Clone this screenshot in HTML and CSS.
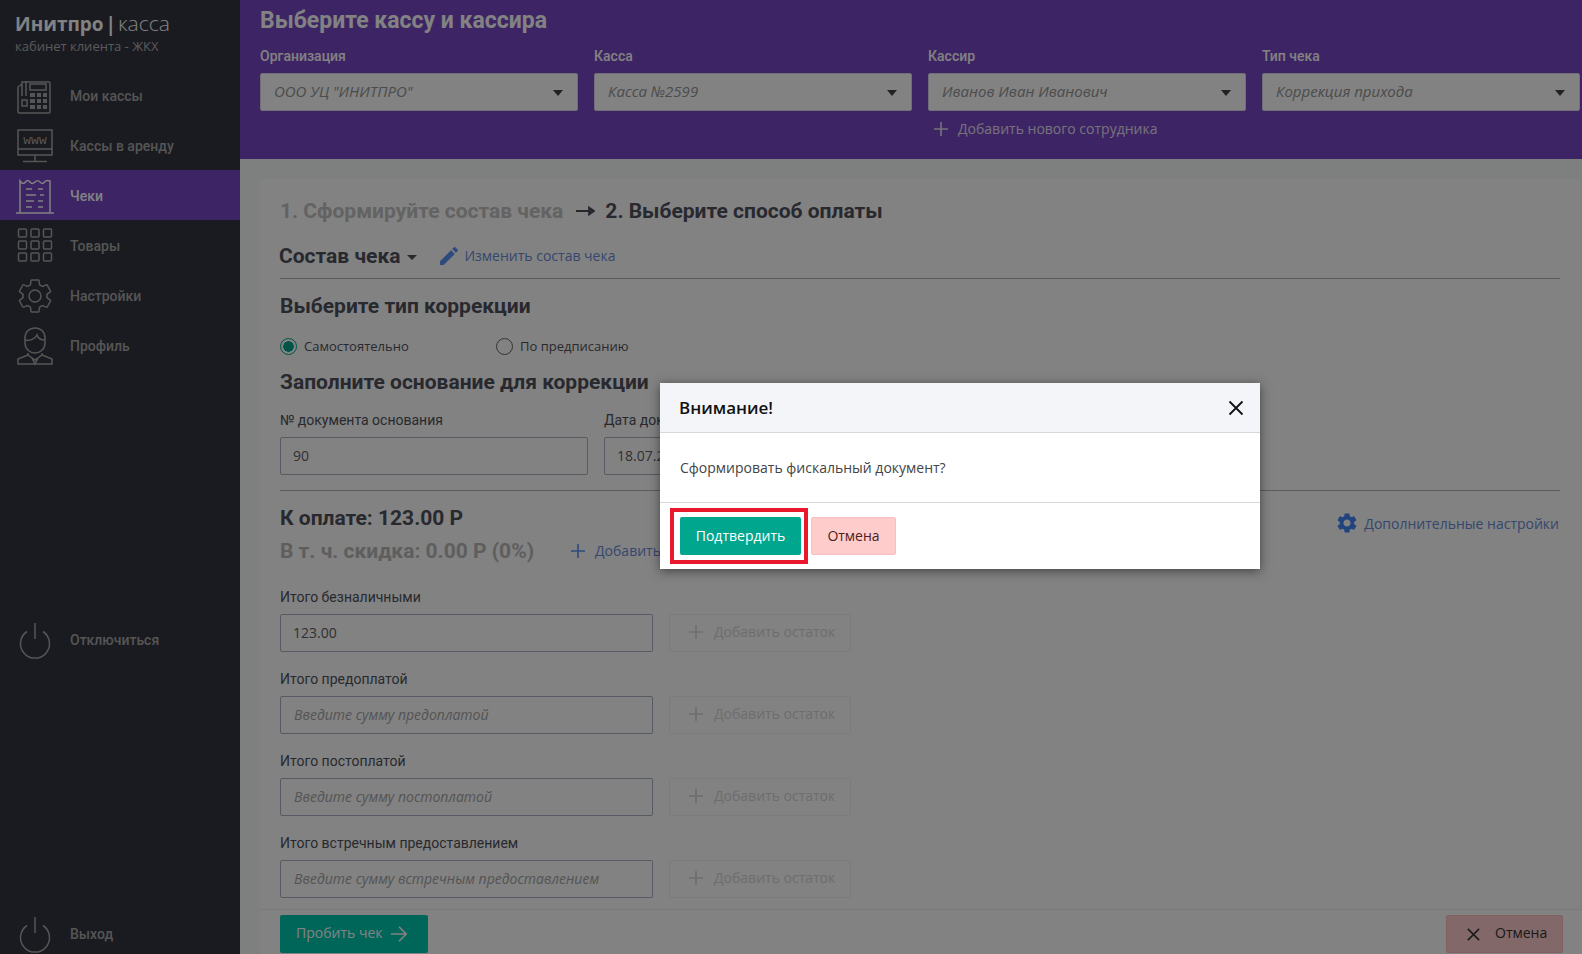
FILE: index.html
```html
<!DOCTYPE html>
<html lang="ru">
<head>
    <meta charset="UTF-8">
    <title>Инитпро | касса</title>
    <link rel="stylesheet" href="styles.css">
</head>
<body>
    <svg class="defs" width="0" height="0">
        <symbol id="gear" viewBox="0 0 24 24">
            <path d="M19.14 12.94c.04-.3.06-.61.06-.94 0-.32-.02-.64-.07-.94l2.03-1.58a.49.49 0 0 0 .12-.61l-1.92-3.32a.488.488 0 0 0-.59-.22l-2.39.96c-.5-.38-1.03-.7-1.62-.94l-.36-2.54a.484.484 0 0 0-.48-.41h-3.84c-.24 0-.43.17-.47.41l-.36 2.54c-.59.24-1.13.57-1.62.94l-2.39-.96c-.22-.08-.47 0-.59.22L2.74 8.87c-.12.21-.08.47.12.61l2.03 1.58c-.05.3-.09.63-.09.94s.02.64.07.94l-2.03 1.58a.49.49 0 0 0-.12.61l1.92 3.32c.12.22.37.29.59.22l2.39-.96c.5.38 1.03.7 1.62.94l.36 2.54c.05.24.24.41.48.41h3.84c.24 0 .44-.17.47-.41l.36-2.54c.59-.24 1.13-.56 1.62-.94l2.39.96c.22.08.47 0 .59-.22l1.92-3.32c.12-.22.07-.47-.12-.61l-2.01-1.58zM12 15.6c-1.98 0-3.6-1.62-3.6-3.6s1.62-3.6 3.6-3.6 3.6 1.62 3.6 3.6-1.62 3.6-3.6 3.6z"/>
        </symbol>
        <symbol id="power" viewBox="0 0 40 40">
            <path d="M12 11.5a14.5 14.5 0 1 0 16 0M20 3v16" fill="none" stroke="currentColor" stroke-width="1.5"/>
        </symbol>
        <symbol id="plus" viewBox="0 0 16 16">
            <path d="M8 1v14M1 8h14" fill="none" stroke="currentColor" stroke-width="1.6"/>
        </symbol>
    </svg>

    <div class="page">
        <!-- Боковое меню -->
        <aside class="sidebar">
            <div class="brand">
                <div class="brand-name"><b>Инитпро | </b><span>касса</span></div>
                <div class="brand-sub">кабинет клиента - ЖКХ</div>
            </div>
            <a class="nav-item">
                <svg class="nav-icon" viewBox="0 0 40 40"><g fill="none" stroke="currentColor" stroke-width="1.5"><path d="M7 6h27a1 1 0 0 1 1 1v29a1 1 0 0 1-1 1H4a1 1 0 0 1-1-1V11l4-3zM7 6v14M11 5v15M7 24h5v6H7z"/><rect x="15" y="8" width="16" height="6"/></g><path d="M15 17h5v4h-5zM22 17h4v4h-4zM28 17h4v4h-4zM15 23h5v4h-5zM22 23h4v4h-4zM28 23h4v4h-4zM15 29h5v4h-5zM22 29h4v4h-4zM28 29h4v4h-4z" fill="currentColor"/></svg>
                <span>Мои кассы</span>
            </a>
            <a class="nav-item">
                <svg class="nav-icon" viewBox="0 0 40 40"><g fill="none" stroke="currentColor" stroke-width="1.5"><rect x="3" y="4" width="34" height="25"/><path d="M3 23h34M20 29v6M8 35.500h24"/></g><text class="www" x="20" y="18" text-anchor="middle">www</text></svg>
                <span>Кассы в аренду</span>
            </a>
            <a class="nav-item active">
                <svg class="nav-icon" viewBox="0 0 40 40"><g fill="none" stroke="currentColor" stroke-width="1.5"><path d="M1 37h38M5 37V5c2 3 4 3 5.500 1s3-2 4.500 0 3 2 5 0 3-2 5 0 3 2 4.500 0 3-2 5.500-1v32"/><path d="M11 13h6M23 13h5M11 19h10M25 19h4M11 25h8M23 25h5M11 31h6M23 31h5"/></g></svg>
                <span>Чеки</span>
            </a>
            <a class="nav-item">
                <svg class="nav-icon" viewBox="0 0 40 40"><g fill="none" stroke="currentColor" stroke-width="1.500"><rect x="3.500" y="3" width="8" height="8" rx="1"/><rect x="16" y="3" width="8" height="8" rx="1"/><rect x="28.500" y="3" width="8" height="8" rx="1"/><rect x="3.500" y="15" width="8" height="8" rx="1"/><rect x="16" y="15" width="8" height="8" rx="1"/><rect x="28.500" y="15" width="8" height="8" rx="1"/><rect x="3.500" y="27" width="8" height="8" rx="1"/><rect x="16" y="27" width="8" height="8" rx="1"/><rect x="28.500" y="27" width="8" height="8" rx="1"/></g></svg>
                <span>Товары</span>
            </a>
            <a class="nav-item">
                <svg class="nav-icon gear-line"><use href="#gear"/></svg>
                <span>Настройки</span>
            </a>
            <a class="nav-item">
                <svg class="nav-icon" viewBox="0 0 40 40"><g fill="none" stroke="currentColor" stroke-width="1.500"><path d="M10 12c0-6 4-10 10-10s10 4 10 10v5c0 6-5 10-10 10s-10-4-10-10z"/><path d="M10 14c5 1 10-1 12-5 1 3 4 5 8 5"/><path d="M13 27v2L3 33v5h34v-5l-10-4v-2"/><path d="M13 29l7 5 7-5M17 32l3 6 3-6"/></g></svg>
                <span>Профиль</span>
            </a>
            <a class="nav-item nav-off">
                <svg class="nav-icon"><use href="#power"/></svg>
                <span>Отключиться</span>
            </a>
            <a class="nav-item nav-exit">
                <svg class="nav-icon"><use href="#power"/></svg>
                <span>Выход</span>
            </a>
        </aside>

        <div class="main">
            <!-- Выбор кассы -->
            <header class="top">
                <h1>Выберите кассу и кассира</h1>
                <div class="top-grid">
                    <div>
                        <div class="top-label">Организация</div>
                        <div class="select">ООО УЦ "ИНИТПРО"</div>
                    </div>
                    <div>
                        <div class="top-label">Касса</div>
                        <div class="select">Касса №2599</div>
                    </div>
                    <div>
                        <div class="top-label">Кассир</div>
                        <div class="select">Иванов Иван Иванович</div>
                        <div class="add-staff"><svg class="plus"><use href="#plus"/></svg>Добавить нового сотрудника</div>
                    </div>
                    <div>
                        <div class="top-label">Тип чека</div>
                        <div class="select">Коррекция прихода</div>
                    </div>
                </div>
            </header>

            <div class="content">
                <div class="card">
                    <div class="steps">
                        <span class="step-done">1. Сформируйте состав чека</span>
                        <svg class="step-arrow" viewBox="0 0 19 12"><path d="M0 6h15M13 2.500l5 3.500-5 3.500z" fill="currentColor" stroke="currentColor" stroke-width="1.800"/></svg>
                        <span>2. Выберите способ оплаты</span>
                    </div>

                    <div class="composition">
                        <span class="composition-title">Состав чека</span>
                        <span class="caret"></span>
                        <a class="link edit-link">
                            <svg class="pencil" viewBox="0 0 24 24"><path d="M3 17.250V21h3.750L17.810 9.940l-3.750-3.750L3 17.250zM20.710 7.040a.996.996 0 0 0 0-1.410l-2.340-2.340a.996.996 0 0 0-1.410 0l-1.830 1.830 3.750 3.750 1.830-1.830z"/></svg>
                            Изменить состав чека
                        </a>
                    </div>

                    <h2 class="type-title">Выберите тип коррекции</h2>
                    <div class="radios">
                        <label class="radio radio-on"><i></i>Самостоятельно</label>
                        <label class="radio"><i></i>По предписанию</label>
                    </div>

                    <h2 class="basis-title">Заполните основание для коррекции</h2>
                    <div class="basis">
                        <div class="basis-col">
                            <div class="field-label">№ документа основания</div>
                            <div class="input">90</div>
                        </div>
                        <div class="basis-col">
                            <div class="field-label">Дата док.</div>
                            <div class="input">18.07.2022</div>
                        </div>
                    </div>

                    <div class="pay">
                        <div>
                            <div class="pay-total">К оплате: 123.00 Р</div>
                            <div class="pay-discount">
                                <span>В т. ч. скидка: 0.00 Р (0%)</span>
                                <a class="link add-discount"><svg class="plus"><use href="#plus"/></svg>Добавить скидку</a>
                            </div>
                        </div>
                        <a class="link extra">
                            <svg class="extra-gear"><use href="#gear"/></svg>
                            Дополнительные настройки
                        </a>
                    </div>

                    <div class="sum">
                        <div class="field-label">Итого безналичными</div>
                        <div class="sum-row">
                            <div class="input sum-input">123.00</div>
                            <div class="rest"><svg class="plus"><use href="#plus"/></svg>Добавить остаток</div>
                        </div>
                    </div>
                    <div class="sum">
                        <div class="field-label">Итого предоплатой</div>
                        <div class="sum-row">
                            <div class="input sum-input empty">Введите сумму предоплатой</div>
                            <div class="rest"><svg class="plus"><use href="#plus"/></svg>Добавить остаток</div>
                        </div>
                    </div>
                    <div class="sum">
                        <div class="field-label">Итого постоплатой</div>
                        <div class="sum-row">
                            <div class="input sum-input empty">Введите сумму постоплатой</div>
                            <div class="rest"><svg class="plus"><use href="#plus"/></svg>Добавить остаток</div>
                        </div>
                    </div>
                    <div class="sum">
                        <div class="field-label">Итого встречным предоставлением</div>
                        <div class="sum-row">
                            <div class="input sum-input empty">Введите сумму встречным предоставлением</div>
                            <div class="rest"><svg class="plus"><use href="#plus"/></svg>Добавить остаток</div>
                        </div>
                    </div>
                </div>
            </div>

            <footer class="bottom">
                <button class="btn-print">Пробить чек
                    <svg class="btn-arrow" viewBox="0 0 20 20"><path d="M1 10h17M10 2l8 8-8 8" fill="none" stroke="currentColor" stroke-width="1.800"/></svg>
                </button>
                <button class="btn-cancel">
                    <svg class="btn-x" viewBox="0 0 16 16"><path d="M2 2l12 12M14 2L2 14" fill="none" stroke="currentColor" stroke-width="1.600"/></svg>
                    Отмена
                </button>
            </footer>
        </div>

        <div class="overlay"></div>

        <!-- Модальное окно -->
        <div class="modal">
            <div class="modal-head">
                <span>Внимание!</span>
                <svg class="modal-close" viewBox="0 0 16 16"><path d="M1.500 1.500l13 13M14.500 1.500l-13 13" fill="none" stroke="#111" stroke-width="1.800"/></svg>
            </div>
            <div class="modal-body">Сформировать фискальный документ?</div>
            <div class="modal-foot">
                <button class="btn-confirm">Подтвердить</button>
                <button class="btn-no">Отмена</button>
                <div class="highlight"></div>
            </div>
        </div>
    </div>
</body>
</html>
```

FILE: styles.css
```css
* {
    box-sizing: border-box;
}
html, body {
    height: 100%;
}
body {
    margin: 0;
    font-family: 'Open Sans', sans-serif;
    font-size: 14px;
    color: #50525c;
    overflow: hidden;
}
h1, h2 {
    margin: 0;
    font-family: Roboto, sans-serif;
}
button {
    font-family: 'Open Sans', sans-serif;
    cursor: pointer;
}
.defs {
    display: block;
}
.page {
    position: relative;
    display: flex;
    height: 954px;
    overflow: hidden;
    background: #f8f9fa;
}

/* sidebar */
.sidebar {
    width: 240px;
    flex-shrink: 0;
    display: flex;
    flex-direction: column;
    background: #33353f;
    color: #a8a8a8;
}
.brand {
    height: 70px;
    padding: 9px 0 0 15px;
}
.brand-name {
    font-size: 19px;
    line-height: 28px;
    color: #fff;
}
.brand-name b {
    font-weight: 700;
    word-spacing: -3px;
}
.brand-name span {
    font-size: 21px;
    font-weight: 300;
}
.brand-sub {
    font-size: 13px;
    line-height: 17px;
    color: #b0b0b0;
}
.nav-item {
    display: flex;
    align-items: center;
    height: 50px;
    padding: 2px 0 0 15px;
    font-family: Roboto, sans-serif;
    font-weight: 500;
    font-size: 14px;
}
.nav-item.active {
    background: #7847c6;
    color: #fff;
}
.nav-off {
    margin-top: 244px;
}
.nav-exit {
    margin-top: auto;
    margin-bottom: -5px;
    padding-top: 0;
}
.nav-icon {
    width: 40px;
    height: 40px;
    margin-right: 15px;
    flex-shrink: 0;
}
.gear-line {
    fill: none;
    stroke: currentColor;
    stroke-width: 0.9;
}
.www {
    font-family: 'Liberation Mono', monospace;
    font-size: 13px;
    fill: currentColor;
}

/* header */
.main {
    flex: 1;
    min-width: 0;
    display: flex;
    flex-direction: column;
}
.top {
    height: 159px;
    flex-shrink: 0;
    padding: 7px 2px 0 20px;
    background: #7847c6;
    color: #fff;
}
.top h1 {
    font-size: 23px;
    line-height: 28px;
    font-weight: 700;
}
.top-grid {
    display: grid;
    grid-template-columns: repeat(4, 318px);
    column-gap: 16px;
    margin-top: 11px;
}
.top-label {
    font-family: Roboto, sans-serif;
    font-weight: 500;
    font-size: 14px;
    line-height: 20px;
    margin-bottom: 7px;
}
.select {
    position: relative;
    height: 38px;
    padding: 0 13px;
    line-height: 35px;
    background: #fff;
    border: 1px solid #ddd8ea;
    border-radius: 2px;
    font-style: italic;
    font-size: 15px;
    color: #959595;
}
.select::after {
    content: "";
    position: absolute;
    right: 14px;
    top: 16px;
    border: 5.500px solid transparent;
    border-top: 6px solid #444;
    border-bottom: 0;
}
.add-staff {
    display: flex;
    align-items: center;
    margin-top: 8px;
    padding-left: 5px;
    line-height: 20px;
    color: #e6e0f2;
}
.plus {
    width: 16px;
    height: 16px;
    margin-right: 9px;
    flex-shrink: 0;
}

/* content */
.content {
    flex: 1;
    min-height: 0;
    overflow: hidden;
    padding: 20px 2px 0 20px;
}
.card {
    padding: 20px;
    background: #fff;
    height: 100%;
    overflow: hidden;
}
.steps {
    display: flex;
    align-items: center;
    height: 24px;
    font-family: Roboto, sans-serif;
    font-weight: 700;
    font-size: 21px;
}
.step-done {
    color: #c2c2c2;
}
.step-arrow {
    width: 19px;
    height: 12px;
    margin: 0 10px 0 13px;
}
.composition {
    display: flex;
    align-items: center;
    height: 35px;
    margin-top: 21px;
    padding-bottom: 11px;
    border-bottom: 1px solid #aeb2b8;
}
.composition-title {
    font-family: Roboto, sans-serif;
    font-weight: 700;
    font-size: 21px;
    margin-left: -1px;
}
.caret {
    margin: 3px 0 0 7px;
    border: 5px solid transparent;
    border-top: 5px solid #50525c;
    border-bottom: 0;
}
.link {
    display: inline-flex;
    align-items: center;
    color: #6b8cd8;
}
.edit-link {
    margin-left: 20px;
}
.pencil {
    width: 24px;
    height: 24px;
    margin-right: 3px;
    fill: #5b93f5;
}
.type-title, .basis-title {
    font-size: 21px;
    line-height: 24px;
    font-weight: 700;
}
.type-title {
    margin-top: 15px;
}
.radios {
    display: flex;
    height: 20px;
    margin-top: 18px;
}
.radio {
    display: flex;
    align-items: center;
    width: 216px;
    font-size: 13px;
}
.radio i {
    width: 17px;
    height: 17px;
    margin-right: 7px;
    border: 1px solid #666;
    border-radius: 50%;
    background: #fff;
}
.radio-on i {
    border-color: #00a68e;
    background: radial-gradient(circle, #00a68e 0 5px, #fff 5.500px);
}
.basis-title {
    margin-top: 14px;
}
.basis {
    display: flex;
    gap: 16px;
    margin-top: 18px;
    padding-bottom: 15px;
    border-bottom: 1px solid #aeb2b8;
}
.basis-col {
    width: 308px;
}
.field-label {
    font-family: Roboto, sans-serif;
    font-size: 14px;
    line-height: 17px;
    margin-bottom: 8px;
}
.input {
    height: 38px;
    padding: 0 12px;
    line-height: 36px;
    background: #fff;
    border: 1px solid #a9b0c0;
    border-radius: 2px;
    color: #5f5f5f;
}
.pay {
    display: flex;
    justify-content: space-between;
    margin-top: 15px;
    padding-right: 1px;
}
.pay-total, .pay-discount {
    font-family: Roboto, sans-serif;
    font-weight: 700;
    font-size: 21px;
    line-height: 24px;
}
.pay-discount {
    display: flex;
    align-items: center;
    margin-top: 9px;
    color: #b8b8b8;
}
.add-discount {
    margin-left: 36px;
    font-family: 'Open Sans', sans-serif;
    font-weight: 400;
    font-size: 14px;
}
.add-discount .plus {
    color: #5b93f5;
}
.extra {
    align-self: flex-start;
    margin-top: 7px;
    height: 20px;
}
.extra-gear {
    width: 24px;
    height: 24px;
    margin-right: 5px;
    fill: #4385f8;
}
.sum {
    margin-top: 19px;
}
.pay + .sum {
    margin-top: 26px;
}
.sum-row {
    display: flex;
    gap: 16px;
}
.sum-input {
    width: 373px;
}
.sum-input.empty {
    padding-left: 13px;
    font-style: italic;
    color: #a5a5a5;
}
.rest {
    display: flex;
    align-items: center;
    width: 182px;
    height: 38px;
    padding: 0 0 3px 18px;
    border: 1px solid #f1f1f1;
    border-radius: 2px;
    color: #d6d6d6;
}
.rest .plus {
    margin-right: 10px;
}

/* bottom bar */
.bottom {
    display: flex;
    justify-content: space-between;
    height: 45px;
    flex-shrink: 0;
    margin-left: 20px;
    padding: 5px 19px 0 20px;
    background: #fff;
    border-top: 1px solid #f0f0f0;
}
.btn-print, .btn-cancel {
    display: flex;
    align-items: center;
    height: 38px;
    padding-bottom: 4px;
    border-radius: 2px;
    font-size: 14px;
}
.btn-print {
    width: 148px;
    padding-left: 16px;
    border: 0;
    background: #00c8ae;
    color: #fff;
}
.btn-arrow {
    width: 18px;
    height: 18px;
    margin: 3px 0 0 8px;
}
.btn-cancel {
    width: 117px;
    padding-left: 19px;
    border: 1px solid #ffbdbd;
    background: #ffcccc;
    color: #333;
}
.btn-x {
    width: 15px;
    height: 15px;
    margin: 3px 14px 0 0;
}

/* modal */
.overlay {
    position: absolute;
    inset: 0;
    background: rgba(0, 0, 0, 0.49);
}
.modal {
    position: absolute;
    left: 660px;
    top: 383px;
    width: 600px;
    height: 186px;
    display: flex;
    flex-direction: column;
    background: #fff;
    box-shadow: 0 2px 10px rgba(0, 0, 0, 0.5);
}
.modal-head {
    display: flex;
    justify-content: space-between;
    align-items: center;
    height: 50px;
    padding: 0 16px 0 19px;
    background: #f4f5f9;
    border-bottom: 1px solid #d5d8dd;
    font-weight: 600;
    font-size: 17px;
    color: #111;
}
.modal-close {
    width: 16px;
    height: 16px;
}
.modal-body {
    height: 70px;
    padding: 0 20px;
    line-height: 70px;
    border-bottom: 1px solid #d5d8dd;
    font-size: 14px;
    color: #444;
}
.modal-foot {
    position: relative;
    display: flex;
    gap: 10px;
    padding: 14px 20px 0;
}
.btn-confirm, .btn-no {
    height: 38px;
    padding-bottom: 3px;
    border-radius: 2px;
    font-size: 14px;
}
.btn-confirm {
    width: 121px;
    border: 0;
    background: #00a68e;
    color: #fff;
}
.btn-no {
    width: 85px;
    border: 1px solid #f7bfc2;
    background: #ffcccc;
    color: #4a2020;
}
.highlight {
    position: absolute;
    left: 10px;
    top: 5px;
    width: 138px;
    height: 56px;
    border: 4px solid #e8192c;
}
```
